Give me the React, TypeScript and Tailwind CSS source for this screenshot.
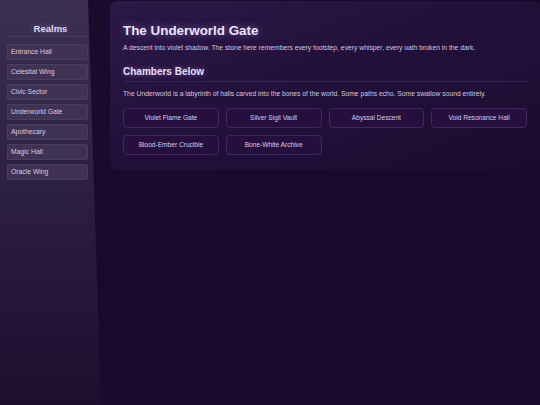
const realms = [
  "Entrance Hall",
  "Celestial Wing",
  "Civic Sector",
  "Underworld Gate",
  "Apothecary",
  "Magic Hall",
  "Oracle Wing",
];

const chambers = [
  "Violet Flame Gate",
  "Silver Sigil Vault",
  "Abyssal Descent",
  "Void Resonance Hall",
  "Blood-Ember Crucible",
  "Bone-White Archive",
];

export default function App() {
  return (
    <div className="flex h-[405px] w-[540px] overflow-hidden bg-gradient-to-br from-[#1b0c2e] via-[#180a2a] to-[#1a0b2f] font-['Liberation_Sans',Arial,sans-serif]">
      {/* sidebar */}
      <aside className="w-[101px] shrink-0 bg-gradient-to-b from-[#3a3050] via-[#2b1f40] to-[#1c0f2e] pt-[23px] [clip-path:polygon(0_0,88px_0,101px_100%,0_100%)]">
        <h2 className="text-center text-[9.5px] font-bold leading-[12px] text-[#ddd2ee] [text-shadow:0_0_6px_rgba(190,160,255,0.45)]">
          Realms
        </h2>
        <div className="ml-[7px] mr-[13px] mt-[1px] border-b border-[#46395c]" />
        <nav className="mt-[7px] flex flex-col gap-[4px] pl-[7px] pr-[13px]">
          {realms.map((r) => (
            <div
              key={r}
              className="flex h-[16px] items-center rounded-[2px] border border-[#4a3e60] bg-[#3f3354] pl-[3px] text-[6.8px] text-[#d6cce4]"
            >
              {r}
            </div>
          ))}
        </nav>
      </aside>

      {/* main */}
      <main className="flex-1 pl-[9px] pt-[1px]">
        <section className="rounded-lg bg-gradient-to-br from-[#2c1947] via-[#221039] to-[#1b0c2f] px-[13px] pb-[15px] pt-[22px]">
          <h1 className="text-[13.4px] font-bold leading-[16px] text-[#ebe3f7] [text-shadow:0_0_8px_rgba(190,150,255,0.55)]">
            The Underworld Gate
          </h1>
          <p className="mt-[4px] text-[6.75px] leading-[9px] text-[#d2c7e2]">
            A descent into violet shadow. The stone here remembers every
            footstep, every whisper, every oath broken in the dark.
          </p>
          <h2 className="mt-[13px] border-b border-[#3a2456] pb-[3px] text-[10px] font-bold leading-[13px] text-[#e6ddf4] [text-shadow:0_0_6px_rgba(190,150,255,0.5)]">
            Chambers Below
          </h2>
          <p className="mt-[7px] text-[6.75px] leading-[9px] text-[#d2c7e2]">
            The Underworld is a labyrinth of halls carved into the bones of
            the world. Some paths echo. Some swallow sound entirely.
          </p>
          <div className="mt-[10px] grid grid-cols-4 gap-x-[7px] gap-y-[7px]">
            {chambers.map((c) => (
              <div
                key={c}
                className="flex h-[20px] items-center justify-center rounded-[4px] border border-[#43265e] bg-[#260f3d] text-[6.6px] text-[#d8cde8]"
              >
                {c}
              </div>
            ))}
          </div>
        </section>
      </main>
    </div>
  );
}
